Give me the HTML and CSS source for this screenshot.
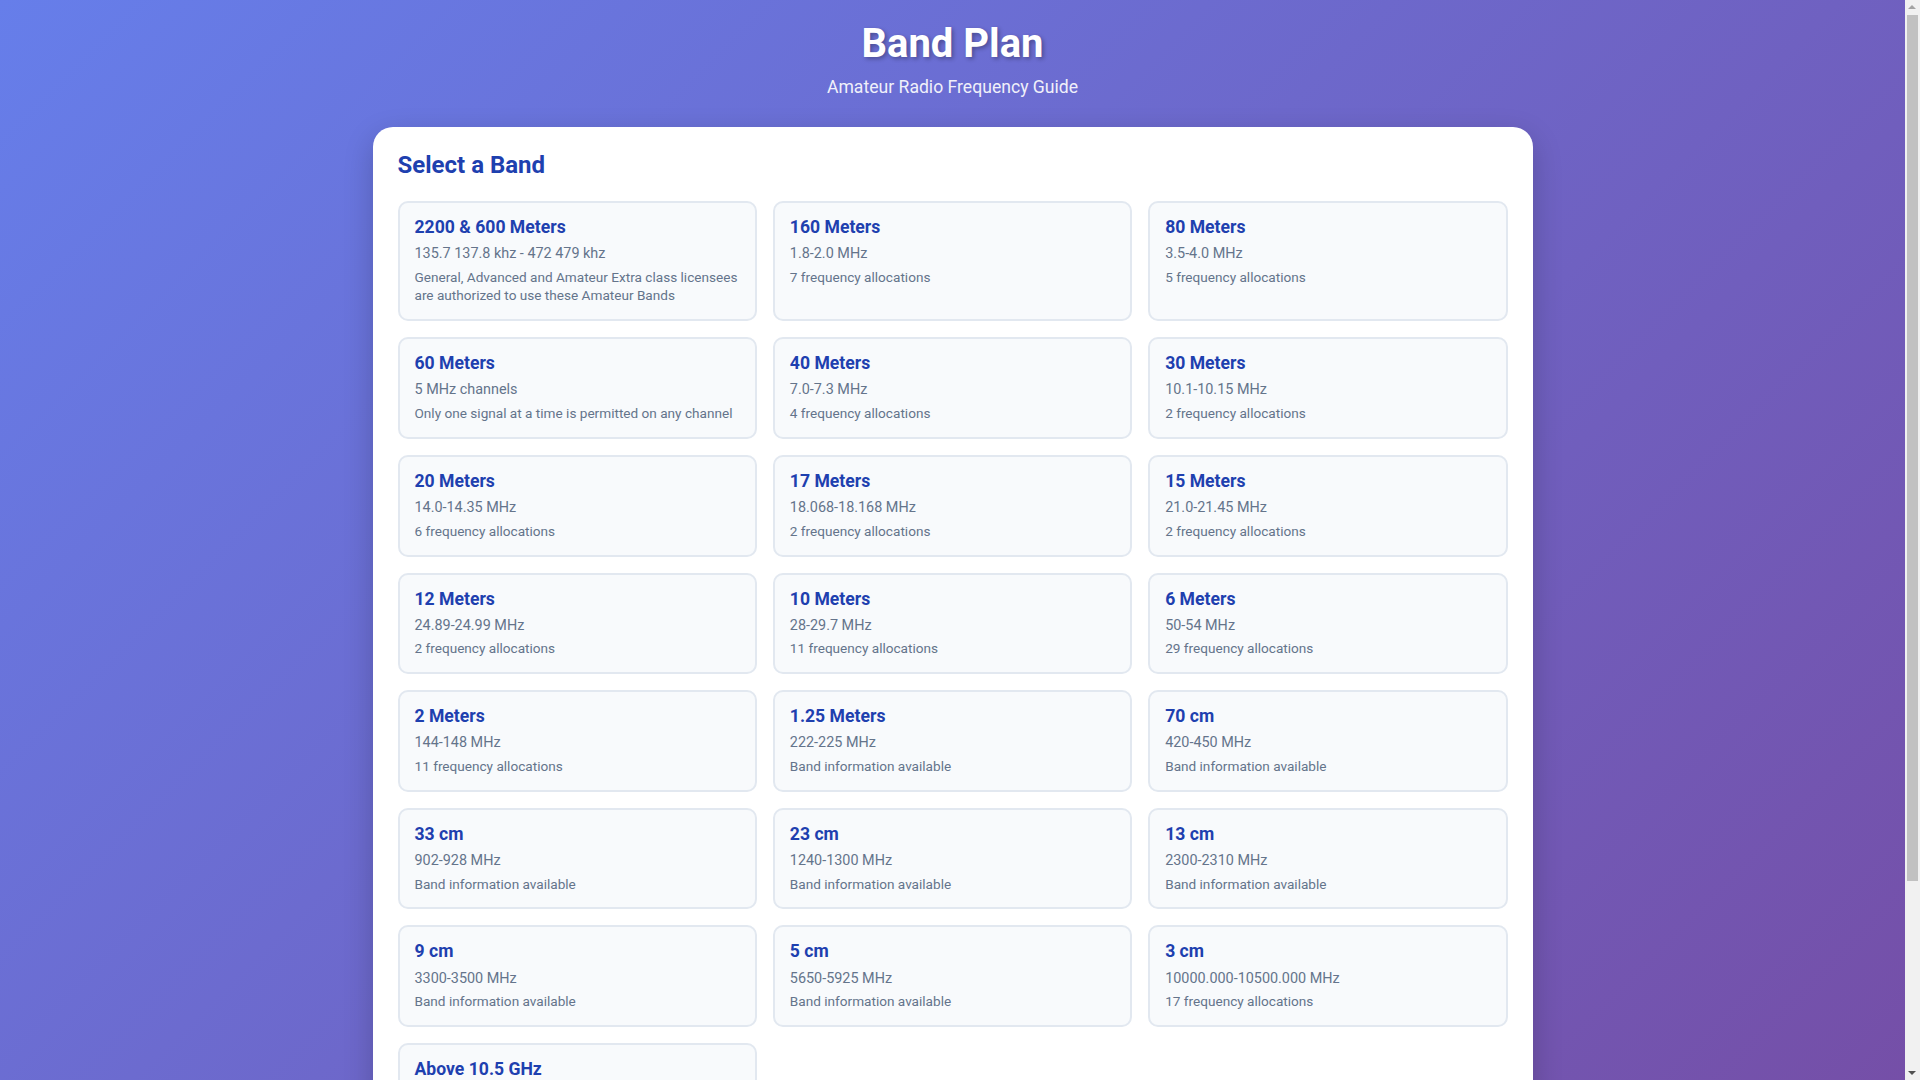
FILE: index.html
```html
<!DOCTYPE html>
<html lang="en">
<head>
<meta charset="utf-8">
<title>Band Plan</title>
<link rel="stylesheet" href="styles.css">
</head>
<body>
<header class="page-header">
  <h1 class="page-title">Band Plan</h1>
  <p class="page-subtitle">Amateur Radio Frequency Guide</p>
</header>
<main class="panel">
  <h2 class="panel-title">Select a Band</h2>
  <div class="band-grid">
    <div class="band-card">
      <h3 class="band-name">2200 &amp; 600 Meters</h3>
      <p class="band-freq">135.7 137.8 khz - 472 479 khz</p>
      <p class="band-info">General, Advanced and Amateur Extra class licensees are authorized to use these Amateur Bands</p>
    </div>
    <div class="band-card">
      <h3 class="band-name">160 Meters</h3>
      <p class="band-freq">1.8-2.0 MHz</p>
      <p class="band-info">7 frequency allocations</p>
    </div>
    <div class="band-card">
      <h3 class="band-name">80 Meters</h3>
      <p class="band-freq">3.5-4.0 MHz</p>
      <p class="band-info">5 frequency allocations</p>
    </div>
    <div class="band-card">
      <h3 class="band-name">60 Meters</h3>
      <p class="band-freq">5 MHz channels</p>
      <p class="band-info">Only one signal at a time is permitted on any channel</p>
    </div>
    <div class="band-card">
      <h3 class="band-name">40 Meters</h3>
      <p class="band-freq">7.0-7.3 MHz</p>
      <p class="band-info">4 frequency allocations</p>
    </div>
    <div class="band-card">
      <h3 class="band-name">30 Meters</h3>
      <p class="band-freq">10.1-10.15 MHz</p>
      <p class="band-info">2 frequency allocations</p>
    </div>
    <div class="band-card">
      <h3 class="band-name">20 Meters</h3>
      <p class="band-freq">14.0-14.35 MHz</p>
      <p class="band-info">6 frequency allocations</p>
    </div>
    <div class="band-card">
      <h3 class="band-name">17 Meters</h3>
      <p class="band-freq">18.068-18.168 MHz</p>
      <p class="band-info">2 frequency allocations</p>
    </div>
    <div class="band-card">
      <h3 class="band-name">15 Meters</h3>
      <p class="band-freq">21.0-21.45 MHz</p>
      <p class="band-info">2 frequency allocations</p>
    </div>
    <div class="band-card">
      <h3 class="band-name">12 Meters</h3>
      <p class="band-freq">24.89-24.99 MHz</p>
      <p class="band-info">2 frequency allocations</p>
    </div>
    <div class="band-card">
      <h3 class="band-name">10 Meters</h3>
      <p class="band-freq">28-29.7 MHz</p>
      <p class="band-info">11 frequency allocations</p>
    </div>
    <div class="band-card">
      <h3 class="band-name">6 Meters</h3>
      <p class="band-freq">50-54 MHz</p>
      <p class="band-info">29 frequency allocations</p>
    </div>
    <div class="band-card">
      <h3 class="band-name">2 Meters</h3>
      <p class="band-freq">144-148 MHz</p>
      <p class="band-info">11 frequency allocations</p>
    </div>
    <div class="band-card">
      <h3 class="band-name">1.25 Meters</h3>
      <p class="band-freq">222-225 MHz</p>
      <p class="band-info">Band information available</p>
    </div>
    <div class="band-card">
      <h3 class="band-name">70 cm</h3>
      <p class="band-freq">420-450 MHz</p>
      <p class="band-info">Band information available</p>
    </div>
    <div class="band-card">
      <h3 class="band-name">33 cm</h3>
      <p class="band-freq">902-928 MHz</p>
      <p class="band-info">Band information available</p>
    </div>
    <div class="band-card">
      <h3 class="band-name">23 cm</h3>
      <p class="band-freq">1240-1300 MHz</p>
      <p class="band-info">Band information available</p>
    </div>
    <div class="band-card">
      <h3 class="band-name">13 cm</h3>
      <p class="band-freq">2300-2310 MHz</p>
      <p class="band-info">Band information available</p>
    </div>
    <div class="band-card">
      <h3 class="band-name">9 cm</h3>
      <p class="band-freq">3300-3500 MHz</p>
      <p class="band-info">Band information available</p>
    </div>
    <div class="band-card">
      <h3 class="band-name">5 cm</h3>
      <p class="band-freq">5650-5925 MHz</p>
      <p class="band-info">Band information available</p>
    </div>
    <div class="band-card">
      <h3 class="band-name">3 cm</h3>
      <p class="band-freq">10000.000-10500.000 MHz</p>
      <p class="band-info">17 frequency allocations</p>
    </div>
    <div class="band-card">
      <h3 class="band-name">Above 10.5 GHz</h3>
      <p class="band-freq">Above 10500 MHz</p>
      <p class="band-info">Band information available</p>
    </div>
  </div>
</main>
<div class="scrollbar" aria-hidden="true">
  <span class="scroll-arrow scroll-arrow-up"></span>
  <span class="scroll-thumb"></span>
  <span class="scroll-arrow scroll-arrow-down"></span>
</div>
</body>
</html>
```

FILE: styles.css
```css
* {
  box-sizing: border-box;
}

html {
  margin: 0;
  padding: 0;
}

body {
  margin: 0;
  padding: 20px 35px 141px 20px;
  min-height: 100vh;
  font-family: Roboto, "Liberation Sans", Arial, sans-serif;
  background: linear-gradient(135deg, #667eea 0%, #764ba2 100%);
  color: #1f2937;
}

.page-header {
  text-align: center;
  color: #ffffff;
  margin-bottom: 27px;
}

.page-title {
  margin: 0 0 6px;
  font-size: 40px;
  font-weight: 700;
  line-height: 1.2;
  text-shadow: 2px 2px 4px rgba(0, 0, 0, 0.3);
}

.page-subtitle {
  margin: 0;
  font-size: 17.6px;
  line-height: 1.5;
  opacity: 0.9;
}

.panel {
  display: block;
  max-width: 1160px;
  margin: 0 auto;
  padding: 24px 25px;
  background: #ffffff;
  border-radius: 20px;
  box-shadow: 0 10px 30px rgba(0, 0, 0, 0.2);
}

.panel-title {
  margin: 0 0 21px;
  font-size: 24px;
  font-weight: 700;
  line-height: 1.2;
  color: #1e40af;
}

.band-grid {
  display: grid;
  grid-template-columns: repeat(3, 1fr);
  gap: 16px;
}

.band-card {
  background: #f8fafc;
  border: 2px solid #e2e8f0;
  border-radius: 10px;
  padding: 14px 15px 14.6px;
  cursor: pointer;
}

.band-name {
  margin: 0 0 5px;
  font-size: 17.6px;
  font-weight: 700;
  line-height: 1.2;
  color: #1e40af;
}

.band-freq {
  margin: 0 0 3px;
  font-size: 14.4px;
  line-height: 1.5;
  color: #64748b;
}

.band-info {
  margin: 0;
  font-size: 13.6px;
  line-height: 1.35;
  color: #64748b;
}

.scrollbar {
  position: fixed;
  top: 0;
  right: 0;
  width: 15px;
  height: 100vh;
  background: #f1f1f1;
}

.scroll-arrow {
  position: absolute;
  left: 3px;
  width: 0;
  height: 0;
  border-left: 4.5px solid transparent;
  border-right: 4.5px solid transparent;
}

.scroll-arrow-up {
  top: 5px;
  border-bottom: 4.5px solid #a3a3a3;
}

.scroll-arrow-down {
  bottom: 5px;
  border-top: 4.5px solid #505050;
}

.scroll-thumb {
  position: absolute;
  top: 15px;
  left: 2px;
  width: 11px;
  height: 866px;
  background: #c1c1c1;
}
```
